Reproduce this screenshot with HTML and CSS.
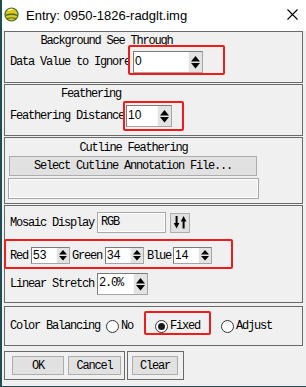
FILE: index.html
```html
<!DOCTYPE html>
<html>
<head>
<meta charset="utf-8">
<link rel="stylesheet" href="styles.css">
</head>
<body>
<div class="window">
  <div class="titlebar">
    <svg class="appicon" width="15" height="15" viewBox="0 0 15 15">
      <circle cx="7.5" cy="7.5" r="6.5" fill="#e0c81c" stroke="#3d6b2c" stroke-width="1.2"/>
      <path d="M1.5 8.5 Q7.5 6 13.5 8.5" stroke="#3d6b2c" stroke-width="1.3" fill="none"/>
      <path d="M3 11.5 Q7.5 10 12 11.5" stroke="#3d6b2c" stroke-width="1" fill="none"/>
      <path d="M4 3.5 Q6 2 9 2.5" stroke="#fff7b0" stroke-width="1.2" fill="none"/>
    </svg>
    <span class="title">Entry: 0950-1826-radglt.img</span>
    <svg class="close" width="11" height="11" viewBox="0 0 11 11">
      <path d="M0.5 0.5 L10.5 10.5 M10.5 0.5 L0.5 10.5" stroke="#000" stroke-width="1.1"/>
    </svg>
  </div>
  <div class="content">
    <div class="panel p1">
      <div class="group">
        <div class="ptitle">Background See Through</div>
        <div class="row r1">
          <span class="lbl clip">Data Value to Ignore</span>
          <div class="spin w70">
            <span class="val">0</span>
            <span class="arr"><svg width="9" height="13" viewBox="0 0 9 13"><path d="M4.5 0 L9 5.5 L0 5.5Z M0 7 L9 7 L4.5 12.5Z" fill="#000"/></svg></span>
          </div>
        </div>
      </div>
    </div>
    <div class="panel p2">
      <div class="group">
        <div class="ptitle">Feathering</div>
        <div class="row r2">
          <span class="lbl g2">Feathering Distance</span>
          <div class="spin w46">
            <span class="val">10</span>
            <span class="arr"><svg width="9" height="13" viewBox="0 0 9 13"><path d="M4.5 0 L9 5.5 L0 5.5Z M0 7 L9 7 L4.5 12.5Z" fill="#000"/></svg></span>
          </div>
        </div>
      </div>
    </div>
    <div class="panel p3">
      <div class="group">
        <div class="ptitle">Cutline Feathering</div>
        <div class="btn selbtn">Select Cutline Annotation File...</div>
        <div class="field longfield"></div>
      </div>
    </div>
    <div class="panel p4">
      <div class="row mrow">
        <span class="lbl g3">Mosaic Display</span>
        <div class="field rgbfield">RGB</div>
        <div class="btn swap">
          <svg width="13" height="13" viewBox="0 0 13 13">
            <path d="M1.6 0 H3.6 V7 H5.4 L2.6 12.5 L-0.2 7 H1.6Z" fill="#000"/>
            <path d="M8.6 12.5 H10.6 V5.5 H12.4 L9.6 0 L6.8 5.5 H8.6Z" fill="#000"/>
          </svg>
        </div>
      </div>
      <div class="row crow">
        <span class="lbl g3">Red</span>
        <div class="spin small w39">
          <span class="val">53</span>
          <span class="arr"><svg width="8" height="11" viewBox="0 0 8 11"><path d="M4 0 L8 4.6 L0 4.6Z M0 6 L8 6 L4 10.6Z" fill="#000"/></svg></span>
        </div>
        <span class="lbl g3 ml2">Green</span>
        <div class="spin small w39">
          <span class="val">34</span>
          <span class="arr"><svg width="8" height="11" viewBox="0 0 8 11"><path d="M4 0 L8 4.6 L0 4.6Z M0 6 L8 6 L4 10.6Z" fill="#000"/></svg></span>
        </div>
        <span class="lbl g2 ml3">Blue</span>
        <div class="spin small w39">
          <span class="val">14</span>
          <span class="arr"><svg width="8" height="11" viewBox="0 0 8 11"><path d="M4 0 L8 4.6 L0 4.6Z M0 6 L8 6 L4 10.6Z" fill="#000"/></svg></span>
        </div>
      </div>
      <div class="row lrow">
        <span class="lbl g3">Linear Stretch</span>
        <div class="spin w51">
          <span class="val mono">2.0%</span>
          <span class="arr"><svg width="9" height="13" viewBox="0 0 9 13"><path d="M4.5 0 L9 5.5 L0 5.5Z M0 7 L9 7 L4.5 12.5Z" fill="#000"/></svg></span>
        </div>
      </div>
    </div>
    <div class="panel p5">
      <span class="lbl">Color Balancing</span>
      <label class="radio r-no"><span class="dot"></span>No</label>
      <label class="radio r-fixed"><span class="dot on"></span>Fixed</label>
      <label class="radio r-adj"><span class="dot"></span>Adjust</label>
    </div>
    <div class="btnrow">
      <div class="btnbox b1">
        <div class="btn act okb">OK</div>
        <div class="btn act cancelb">Cancel</div>
      </div>
      <div class="btnbox b2">
        <div class="btn act clearb">Clear</div>
      </div>
    </div>
  </div>
  <div class="mark m1"></div>
  <div class="mark m2"></div>
  <div class="mark m3"></div>
  <div class="mark m4"></div>
</div>
</body>
</html>
```

FILE: styles.css
```css
html, body {
  margin: 0;
  padding: 0;
  background: #f0f0f0;
}
body {
  width: 306px;
  height: 387px;
  overflow: hidden;
}
.window {
  position: relative;
  width: 306px;
  height: 387px;
  box-sizing: border-box;
  border-left: 2px solid #1d4d55;
  border-bottom: 1px solid #1d4d55;
  background: #f0f0f0;
  font-family: "Liberation Mono", monospace;
  font-size: 12px;
  letter-spacing: -1.2px;
  color: #000;
}
.titlebar {
  height: 31px;
  background: #fff;
  display: flex;
  align-items: center;
  padding-left: 2px;
  box-sizing: border-box;
}
.appicon {
  margin-top: -2px;
}
.title {
  margin-left: 7px;
  font-family: "Liberation Sans", Arial, sans-serif;
  font-size: 13px;
  letter-spacing: 0;
  color: #000;
  margin-top: -1px;
}
.close {
  margin-left: auto;
  margin-right: 8px;
  margin-top: -2px;
}
.content {
  padding: 0 3px 0 2px;
}
.panel {
  border: 1px solid #6a6a6a;
  box-sizing: border-box;
  padding-left: 5px;
}
.group {
  display: inline-flex;
  flex-direction: column;
}
.ptitle {
  align-self: center;
  height: 14px;
  line-height: 14px;
  white-space: nowrap;
}
.row {
  display: flex;
  align-items: center;
}
.lbl {
  white-space: nowrap;
  line-height: 14px;
}
.clip {
  width: 120px;
  overflow: hidden;
  margin-right: 3px;
}
.g2 { margin-right: 2px; }
.g3 { margin-right: 3px; }
.ml2 { margin-left: 2px; }
.ml3 { margin-left: 3px; }

.p1 { height: 52px; padding-top: 2px; }
.r1 { margin-top: 3px; }
.p2 { height: 52px; margin-top: 1px; padding-top: 2px; }
.r2 { margin-top: 4px; }
.p3 { height: 67px; margin-top: 1px; padding-top: 3px; padding-left: 3px; }
.p4 { height: 98px; margin-top: 1px; padding-top: 6px; }
.p5 {
  height: 40px;
  margin-top: 3px;
  display: flex;
  align-items: center;
}

.spin {
  display: flex;
  height: 22px;
  box-sizing: border-box;
  border: 1px solid #a5a5a5;
  border-top-color: #7c7c7c;
  border-left-color: #7c7c7c;
  background: #fff;
}
.spin.small { height: 17px; }
.w70 { width: 70px; }
.w46 { width: 46px; }
.w39 { width: 39px; }
.w51 { width: 51px; }
.spin .val {
  flex: 1;
  font-family: "Liberation Sans", Arial, sans-serif;
  font-size: 12px;
  letter-spacing: 0;
  line-height: 13px;
  padding: 3px 0 0 1px;
}
.spin.small .val { padding-top: 1px; }
.spin .val.mono {
  font-family: "Liberation Mono", monospace;
  font-size: 12px;
  letter-spacing: -1.2px;
}
.spin .arr {
  width: 13px;
  background: #e3e3e3;
  border-left: 1px solid #f8f8f8;
  display: flex;
  align-items: center;
  justify-content: center;
}
.spin.small .arr { width: 12px; }

.btn {
  box-sizing: border-box;
  background: #e1e1e1;
  border: 1px solid #adadad;
  display: flex;
  align-items: center;
  justify-content: center;
  white-space: nowrap;
}
.selbtn {
  width: 248px;
  height: 20px;
  margin-top: 1px;
  margin-left: 1px;
}
.field {
  box-sizing: border-box;
  border: 1px solid #a8a8a8;
  box-shadow: inset 0 0 0 1px #fdfdfd;
  background: #f0f0f0;
}
.longfield {
  width: 251px;
  height: 21px;
  margin-top: 2px;
}
.mrow { height: 21px; }
.rgbfield {
  width: 69px;
  height: 21px;
  padding: 3px 0 0 3px;
  line-height: 13px;
}
.swap {
  width: 20px;
  height: 20px;
  margin-left: 4px;
}
.crow { margin-top: 14px; }
.lrow { margin-top: 9px; }

.radio {
  display: flex;
  align-items: center;
  white-space: nowrap;
}
.dot {
  width: 13px;
  height: 13px;
  box-sizing: border-box;
  border: 1px solid #333;
  border-radius: 50%;
  background: #fff;
  margin-right: 2px;
  display: flex;
  align-items: center;
  justify-content: center;
}
.dot.on::after {
  content: "";
  width: 7px;
  height: 7px;
  border-radius: 50%;
  background: #1a1a1a;
}
.r-no { margin-left: 6px; }
.r-fixed { margin-left: 22px; }
.r-adj { margin-left: 21px; }

.btnrow {
  display: flex;
  margin-top: 5px;
  gap: 2px;
}
.btnbox {
  box-sizing: border-box;
  height: 29px;
  border: 1px solid #6a6a6a;
  display: flex;
  padding-top: 4px;
}
.b1 { width: 121px; padding-left: 7px; }
.b2 { width: 57px; padding-left: 4px; }
.btn.act { height: 19px; }
.okb { width: 52px; }
.cancelb { width: 53px; margin-left: 4px; }
.clearb { width: 46px; }

.mark {
  position: absolute;
  box-sizing: border-box;
  border: 2px solid #f01c1c;
  border-radius: 2px;
}
.m1 { left: 126px; top: 45px; width: 97px; height: 30px; }
.m2 { left: 121px; top: 101px; width: 61px; height: 30px; }
.m3 { left: 2px; top: 239px; width: 229px; height: 30px; }
.m4 { left: 142px; top: 311px; width: 67px; height: 24px; }
```
